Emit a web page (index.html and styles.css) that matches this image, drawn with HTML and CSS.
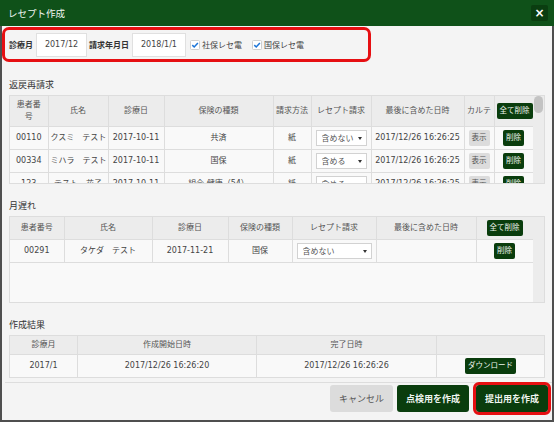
FILE: index.html
```html
<!DOCTYPE html>
<html lang="ja">
<head>
    <meta charset="UTF-8">
    <meta name="viewport" content="width=device-width, initial-scale=1.0">
    <title>レセプト作成</title>
    <link rel="stylesheet" href="styles.css">
</head>
<body>
<div class="dialog">
    <div class="dialog-title">
        <span>レセプト作成</span>
        <button class="close-btn">×</button>
    </div>
    <div class="dialog-body">
        <div class="filter">
            <label class="filter-label">診療月</label>
            <input class="filter-input" type="text" value="2017/12">
            <label class="filter-label">請求年月日</label>
            <input class="filter-input filter-input-date" type="text" value="2018/1/1">
            <label class="check">
                <svg class="check-box" viewBox="0 0 10 10" width="10" height="10"><rect x="0.5" y="0.5" width="9" height="9" rx="1" fill="#fff" stroke="#cfcfcf"/><path d="M2.3 5.1 L4.2 7 L7.9 2.9" fill="none" stroke="#1b74d8" stroke-width="1.5"/></svg>
                社保レセ電
            </label>
            <label class="check">
                <svg class="check-box" viewBox="0 0 10 10" width="10" height="10"><rect x="0.5" y="0.5" width="9" height="9" rx="1" fill="#fff" stroke="#cfcfcf"/><path d="M2.3 5.1 L4.2 7 L7.9 2.9" fill="none" stroke="#1b74d8" stroke-width="1.5"/></svg>
                国保レセ電
            </label>
        </div>

        <!-- 返戻再請求 -->
        <section class="section section-first">
            <h2 class="section-title">返戻再請求</h2>
            <div class="grid-box grid-box-returned">
                <div class="grid-scroll">
                    <table class="grid">
                        <colgroup>
                            <col style="width:38px"><col style="width:60px"><col style="width:56px"><col style="width:109px"><col style="width:38px"><col style="width:60px"><col style="width:93px"><col style="width:30px"><col style="width:39px">
                        </colgroup>
                        <thead>
                            <tr><th>患者番<br>号</th><th>氏名</th><th>診療日</th><th>保険の種類</th><th>請求方法</th><th>レセプト請求</th><th>最後に含めた日時</th><th>カルテ</th><th><button class="btn-sm btn-green">全て削除</button></th></tr>
                        </thead>
                        <tbody>
                            <tr><td>00110</td><td>クスミ　テスト</td><td>2017-10-11</td><td>共済</td><td>紙</td><td><span class="select"><select><option selected>含めない</option><option>含める</option></select></span></td><td>2017/12/26 16:26:25</td><td><button class="btn-sm btn-gray">表示</button></td><td><button class="btn-sm btn-green">削除</button></td></tr>
                            <tr><td>00334</td><td>ミハラ　テスト</td><td>2017-10-11</td><td>国保</td><td>紙</td><td><span class="select"><select><option>含めない</option><option selected>含める</option></select></span></td><td>2017/12/26 16:26:25</td><td><button class="btn-sm btn-gray">表示</button></td><td><button class="btn-sm btn-green">削除</button></td></tr>
                            <tr><td>123</td><td>テスト　花子</td><td>2017-10-11</td><td>組合 健康（54）</td><td>紙</td><td><span class="select"><select><option>含めない</option><option selected>含める</option></select></span></td><td>2017/12/26 16:26:25</td><td><button class="btn-sm btn-gray">表示</button></td><td><button class="btn-sm btn-green">削除</button></td></tr>
                            <tr><td>00215</td><td>サトウ　テスト</td><td>2017-10-12</td><td>社保</td><td>紙</td><td><span class="select"><select><option>含めない</option><option selected>含める</option></select></span></td><td>2017/12/26 16:26:25</td><td><button class="btn-sm btn-gray">表示</button></td><td><button class="btn-sm btn-green">削除</button></td></tr>
                            <tr><td>00248</td><td>ヤマダ　テスト</td><td>2017-10-12</td><td>国保</td><td>紙</td><td><span class="select"><select><option>含めない</option><option selected>含める</option></select></span></td><td>2017/12/26 16:26:25</td><td><button class="btn-sm btn-gray">表示</button></td><td><button class="btn-sm btn-green">削除</button></td></tr>
                        </tbody>
                    </table>
                </div>
                <div class="scrollbar"><div class="scrollbar-thumb"></div></div>
            </div>
        </section>

        <!-- 月遅れ -->
        <section class="section">
            <h2 class="section-title">月遅れ</h2>
            <div class="grid-box grid-box-late">
                <div class="grid-scroll">
                    <table class="grid">
                        <colgroup>
                            <col style="width:54px"><col style="width:88px"><col style="width:76px"><col style="width:64px"><col style="width:84px"><col style="width:100px"><col style="width:57px">
                        </colgroup>
                        <thead>
                            <tr><th>患者番号</th><th>氏名</th><th>診療日</th><th>保険の種類</th><th>レセプト請求</th><th>最後に含めた日時</th><th><button class="btn-sm btn-green">全て削除</button></th></tr>
                        </thead>
                        <tbody>
                            <tr><td>00291</td><td>タケダ　テスト</td><td>2017-11-21</td><td>国保</td><td><span class="select"><select><option selected>含めない</option><option>含める</option></select></span></td><td></td><td><button class="btn-sm btn-green">削除</button></td></tr>
                        </tbody>
                    </table>
                </div>
                <div class="scrollbar"></div>
            </div>
        </section>

        <!-- 作成結果 -->
        <section class="section">
            <h2 class="section-title">作成結果</h2>
            <table class="grid grid-static">
                <colgroup>
                    <col style="width:68px"><col style="width:179px"><col style="width:180px"><col>
                </colgroup>
                <thead>
                    <tr><th>診療月</th><th>作成開始日時</th><th>完了日時</th><th></th></tr>
                </thead>
                <tbody>
                    <tr><td>2017/1</td><td>2017/12/26 16:26:20</td><td>2017/12/26 16:26:26</td><td><button class="btn-sm btn-green">ダウンロード</button></td></tr>
                </tbody>
            </table>
        </section>

        <div class="dialog-footer">
            <button class="btn btn-cancel">キャンセル</button>
            <button class="btn btn-primary">点検用を作成</button>
            <button class="btn btn-primary btn-submit">提出用を作成</button>
        </div>
    </div>
</div>
</body>
</html>
```

FILE: styles.css
```css
* {
    box-sizing: border-box;
}

body {
    margin: 0;
    background-color: #fff;
    font-family: "DejaVu Sans", "Noto Sans CJK JP", sans-serif;
    color: #555;
}

.dialog {
    width: 554px;
}

.dialog-title {
    height: 26px;
    display: flex;
    align-items: center;
    justify-content: space-between;
    padding: 0 6px 0 8px;
    background-color: #0f5119;
    color: #f2f6f2;
    font-family: "Noto Sans CJK JP", sans-serif;
    font-size: 9.5px;
}

.close-btn {
    width: 17px;
    height: 16px;
    padding: 0;
    border: none;
    border-radius: 2px;
    background-color: #0a3d10;
    color: #fff;
    font-family: "DejaVu Sans", sans-serif;
    font-size: 12px;
    font-weight: bold;
    line-height: 16px;
}

.dialog-body {
    background-color: #f4f4f4;
    border: 2px solid #4f4f4f;
    border-top: none;
    padding-top: 1px;
}

/* 検索条件 */
.filter {
    width: 369px;
    height: 35px;
    display: flex;
    align-items: center;
    padding-left: 4px;
    border: 3px solid #e60f12;
    border-radius: 7px;
    font-size: 8px;
}

.filter-label {
    font-weight: bold;
    color: #333;
    margin-right: 3px;
}

.filter-input {
    width: 51px;
    height: 24px;
    padding: 0;
    margin-right: 2px;
    border: 1px solid #e0e0e0;
    background-color: #fff;
    text-align: center;
    font-family: inherit;
    font-size: 8px;
    color: #444;
}

.filter-input-date {
    width: 54px;
    margin-right: 4px;
}

.check {
    display: flex;
    align-items: center;
    gap: 2px;
    margin-right: 10px;
    color: #444;
}

.check-box {
    display: block;
}

/* 一覧 */
.section {
    margin: 16px 7px 0;
}

.section-first {
    margin-top: 17px;
}

.section-title {
    margin: 0 0 4px;
    font-size: 9px;
    line-height: 12px;
    font-weight: normal;
    color: #333;
}

.grid-box {
    display: flex;
    border: 1px solid #ddd;
    background-color: #f9f9f9;
}

.grid-box-returned {
    height: 89px;
}

.grid-box-late {
    height: 87px;
}

.grid-scroll {
    flex: 1;
    overflow-y: auto;
}

/* 縦スクロールバー */
.scrollbar {
    width: 11px;
    flex-shrink: 0;
    padding: 0 1px;
    background-color: #ececec;
}

.scrollbar-thumb {
    height: 17px;
    border-radius: 5px;
    background-color: #c3c3c3;
}

.grid {
    width: 100%;
    border-collapse: collapse;
    table-layout: fixed;
    font-size: 8px;
}

.grid th, .grid td {
    border: 1px solid #ddd;
    padding: 3px 2px;
    line-height: 12px;
    text-align: center;
    white-space: nowrap;
    vertical-align: middle;
}

.grid-scroll .grid th, .grid-scroll .grid td {
    border-width: 0 1px 1px 0;
}

.grid th {
    background-color: #ececec;
    font-weight: normal;
    color: #555;
}

.grid td {
    background-color: #f9f9f9;
    color: #444;
}

.select {
    display: block;
    position: relative;
    margin: 0 2px;
}

.select select {
    display: block;
    width: 100%;
    height: 16px;
    padding: 0 0 0 5px;
    border: 1px solid #d2d2d2;
    background-color: #fff;
    font-family: inherit;
    font-size: 8px;
    color: #555;
    appearance: none;
    -webkit-appearance: none;
}

.select::after {
    content: "";
    position: absolute;
    right: 5px;
    top: 7px;
    border-left: 2px solid transparent;
    border-right: 2px solid transparent;
    border-top: 3px solid #333;
}

.btn-sm {
    display: inline-block;
    height: 16px;
    padding: 0 3px;
    border: none;
    border-radius: 2px;
    font-family: inherit;
    font-size: 7.5px;
    line-height: 16px;
    vertical-align: middle;
}

.btn-green {
    background-color: #0a3d0d;
    color: #eef5ee;
}

.btn-gray {
    background-color: #dcdcdc;
    color: #555;
}

/* フッター */
.dialog-footer {
    display: flex;
    justify-content: flex-end;
    gap: 4px;
    margin: 4px 0 0 3px;
    padding: 2px 4px 8px 0;
    border-top: 1px solid #ddd;
}

.btn {
    height: 27px;
    padding: 0 9px;
    border: none;
    border-radius: 3px;
    font-family: inherit;
    font-size: 9px;
}

.btn-cancel {
    background-color: #dcdcdc;
    color: #555;
}

.btn-primary {
    background-color: #0a3d0d;
    color: #f0f5f0;
    font-weight: bold;
}

.btn-submit {
    margin-left: 3px;
    outline: 3px solid #e60f12;
}
```
